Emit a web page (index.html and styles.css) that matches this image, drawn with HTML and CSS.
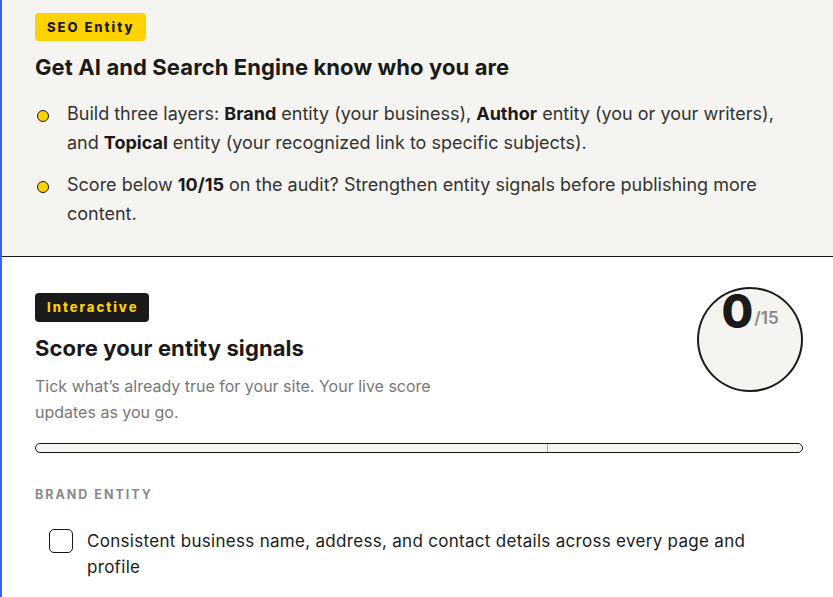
FILE: index.html
```html
<!DOCTYPE html>
<html lang="en">
<head>
<meta charset="utf-8">
<title>SEO Entity</title>
<link rel="stylesheet" href="styles.css">
</head>
<body>
<div class="page">
  <section class="intro">
    <span class="badge badge-yellow">SEO Entity</span>
    <h2 class="title">Get AI and Search Engine know who you are</h2>
    <ul class="bullets">
      <li>Build three layers: <b>Brand</b> entity (your business), <b>Author</b> entity (you or your writers), and <b>Topical</b> entity (your recognized link to specific subjects).</li>
      <li>Score below <b>10/15</b> on the audit? Strengthen entity signals before publishing more content.</li>
    </ul>
  </section>
  <section class="tool">
    <div class="tool-head">
      <div class="tool-text">
        <span class="badge badge-dark">Interactive</span>
        <h2 class="title">Score your entity signals</h2>
        <p class="desc">Tick what’s already true for your site. Your live score updates as you go.</p>
      </div>
      <div class="score">
        <span class="score-num">0</span><span class="score-max">/15</span>
      </div>
    </div>
    <div class="bar"><div class="bar-mark" style="left: 66.67%"></div></div>
    <h3 class="group">BRAND ENTITY</h3>
    <label class="check">
      <span class="box"></span>
      <span class="check-text">Consistent business name, address, and contact details across every page and profile</span>
    </label>
  </section>
</div>
</body>
</html>
```

FILE: styles.css
```css
* { box-sizing: border-box; }
html, body { margin: 0; padding: 0; background: #ffffff; }
body {
  font-family: Inter, "Noto Sans", "Liberation Sans", sans-serif;
  color: #1a1a1a;
}
.page {
  border-left: 2px solid #3d63e0;
  min-height: 700px;
}
.intro {
  background: #f5f4f0;
  padding: 13px 30px 28px 33px;
  border-bottom: 1px solid #1a1a1a;
}
.badge {
  display: inline-block;
  font-size: 13px;
  font-weight: 800;
  letter-spacing: 2px;
  line-height: 28px;
  height: 28px;
  padding: 0 11px 0 12px;
  border-radius: 4px;
}
.badge-yellow { background: #ffd200; color: #1a1a1a; }
.badge-dark { background: #1a1a1a; color: #ffd200; height: 29px; line-height: 29px; }
.title {
  margin: 11px 0 0;
  font-size: 22px;
  font-weight: 700;
  letter-spacing: 0.1px;
  line-height: 30px;
}
.bullets {
  list-style: none;
  margin: 17px 0 0;
  padding: 0;
}
.bullets li {
  position: relative;
  padding-left: 32px;
  font-size: 18px;
  line-height: 29px;
  color: #333;
  margin-bottom: 13px;
}
.bullets li:last-child { margin-bottom: 0; }
.bullets li::before {
  content: "";
  position: absolute;
  left: 2px;
  top: 11px;
  width: 10px;
  height: 10px;
  border-radius: 50%;
  background: #ffd200;
  border: 1.5px solid #1a1a1a;
}
.bullets b { font-weight: 700; color: #1a1a1a; }
.tool {
  padding: 30px 30px 20px 33px;
}
.tool-head {
  display: flex;
  justify-content: space-between;
  align-items: flex-start;
}
.tool-text { padding-top: 6px; }
.desc {
  margin: 10px 0 0;
  width: 420px;
  font-size: 16px;
  line-height: 26px;
  color: #777;
}
.score {
  width: 106px;
  height: 105px;
  border: 2px solid #1a1a1a;
  border-radius: 50%;
  background: #f5f4f0;
  display: flex;
  justify-content: center;
  align-items: flex-start;
  line-height: 1;
}
.score-num {
  font-size: 46px;
  font-weight: 800;
  line-height: 46px;
  margin-top: -1px;
  letter-spacing: -1px;
}
.score-max {
  font-size: 17px;
  font-weight: 600;
  color: #888;
  margin-top: 21px;
  margin-left: 2px;
}
.bar {
  position: relative;
  margin-top: 18px;
  height: 10px;
  border: 1.5px solid #1a1a1a;
  border-radius: 6px;
  background: #f5f4f0;
}
.bar-mark {
  position: absolute;
  top: 0;
  bottom: 0;
  width: 1.5px;
  background: #aaa;
}
.group {
  margin: 34px 0 0;
  font-size: 12.5px;
  font-weight: 700;
  letter-spacing: 2px;
  color: #8a8a8a;
}
.check {
  display: flex;
  align-items: flex-start;
  gap: 14px;
  margin-top: 27px;
  padding-left: 14px;
}
.box {
  flex: none;
  width: 24px;
  height: 24px;
  border: 1.5px solid #1a1a1a;
  border-radius: 5px;
  background: #fff;
}
.check-text {
  font-size: 17px;
  line-height: 26px;
  letter-spacing: 0.3px;
  color: #1a1a1a;
  width: 690px;
  margin-top: -1px;
}
```
